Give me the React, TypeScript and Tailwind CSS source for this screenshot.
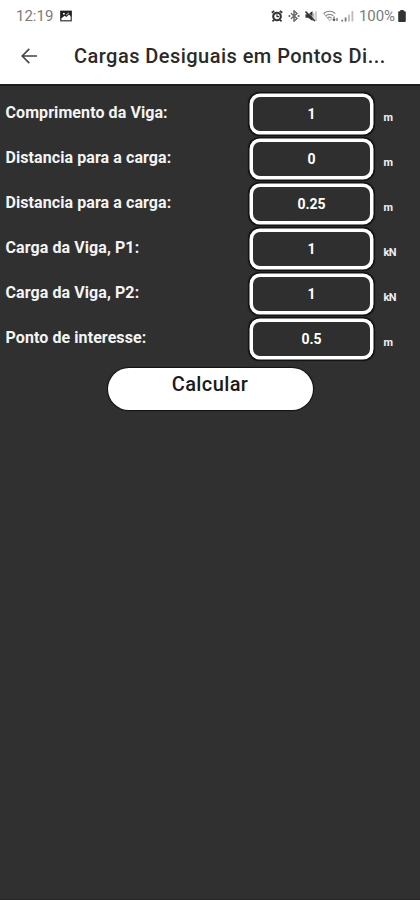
import { useState } from 'react';

interface Field {
  label: string;
  value: string;
  unit: string;
}

const initialFields: Field[] = [
  { label: 'Comprimento da Viga:', value: '1', unit: 'm' },
  { label: 'Distancia para a carga:', value: '0', unit: 'm' },
  { label: 'Distancia para a carga:', value: '0.25', unit: 'm' },
  { label: 'Carga da Viga, P1:', value: '1', unit: 'kN' },
  { label: 'Carga da Viga, P2:', value: '1', unit: 'kN' },
  { label: 'Ponto de interesse:', value: '0.5', unit: 'm' },
];

const StatusBar = () => (
  <div className="flex h-8 items-center pl-4 pr-[14px] text-[#7c7c7c]">
    <span className="w-[38px] whitespace-nowrap text-[15px] leading-8">12:19</span>
    {/* picture notification */}
    <svg className="ml-[6px] h-3 w-3" viewBox="0 0 12 12">
      <rect x="0.8" y="1.2" width="10.4" height="9.6" fill="#fff" stroke="#333" strokeWidth="1.2" />
      <path d="M.5 1h11v6L9 4.5 6.4 7 4.6 5.8.5 9z" fill="#222" />
      <path d="M3 3h1.8v1.4H3z" fill="#fff" />
      <path d="m6 5.2 3-2.4" stroke="#fff" strokeWidth="0.8" />
    </svg>

    <div className="ml-auto flex items-center">
      {/* alarm */}
      <svg className="h-3 w-3" viewBox="0 0 12 12" fill="none">
        <circle cx="6" cy="6.5" r="3.8" fill="#fff" stroke="#333" strokeWidth="2.1" />
        <path d="M.8 2.8 3.2.9M11.2 2.8 8.8.9M2.8 10 1.5 11.4M9.2 10l1.3 1.4" stroke="#333" strokeWidth="1.8" />
        <path d="M6 4.2v2.5h2" stroke="#333" strokeWidth="1.2" />
      </svg>
      {/* bluetooth */}
      <svg className="ml-[5px] h-3 w-3" viewBox="0 0 12 12" fill="none">
        <path d="m3 3.3 6 5.2-3 2.7V.8l3 2.7-6 5.2" stroke="#666" strokeWidth="1.4" />
        <circle cx="1.4" cy="6" r="1.1" fill="#666" />
        <circle cx="10.6" cy="6" r="1.1" fill="#666" />
      </svg>
      {/* muted speaker */}
      <svg className="ml-[5px] h-3 w-3" viewBox="0 0 12 12" fill="none">
        <path d="M.5 4.2h2.8L7.5 1v10L3.3 7.8H.5z" fill="#333" />
        <path d="m1.5 1 9 9" stroke="#fff" strokeWidth="0.7" />
        <path d="m.5 1.5 9.5 9.5" stroke="#333" strokeWidth="1.6" />
        <path d="M8.8 3.2v5.3M11 1.2v10" stroke="#999" strokeWidth="0.9" />
      </svg>
      {/* wifi */}
      <svg className="ml-[6px] h-3 w-4" viewBox="0 0 16 12" fill="none">
        <path d="M.7 3.5C4 .5 9 .5 12.3 3.5M2.7 5.8c2-2 5.5-2 7.6 0M4.6 8c1-1 2.8-1 3.8 0" stroke="#888" strokeWidth="1.2" />
        <path d="m.7 3.5 6 7.2L9 8.5" stroke="#999" strokeWidth="0.9" />
        <path d="M11 6.5v4M9.7 9.3 11 10.7l1.3-1.4M14 11V8" stroke="#555" strokeWidth="1.1" />
      </svg>
      {/* signal */}
      <svg className="ml-[2px] h-3 w-[13px]" viewBox="0 0 13 12" fill="none">
        <path d="M1.2 11.5V9.7M4.6 11.5v-4" stroke="#777" strokeWidth="1.8" />
        <path d="M8 11.5V4.7M11.4 11.5V1" stroke="#bcbcbc" strokeWidth="1.8" />
      </svg>
      <span className="ml-[5px] w-[37px] whitespace-nowrap text-[15px] leading-8 tracking-[-0.1px]">100%</span>
      {/* battery */}
      <svg className="ml-[2px] h-3 w-2" viewBox="0 0 8 12" fill="#333">
        <rect x="2.3" y="0" width="3.4" height="2" />
        <rect x="0.2" y="1.2" width="7.6" height="10.8" rx="1" />
      </svg>
    </div>
  </div>
);

const FieldRow = ({ field, onChange }: { field: Field; onChange: (value: string) => void }) => (
  <label className="flex h-10 items-start pl-[5.5px]">
    <span className="w-[244.5px] whitespace-nowrap pt-[7px] text-[16px] font-bold leading-6 tracking-[0.08px] text-[#f4f4f4]">
      {field.label}
    </span>
    <input
      value={field.value}
      onChange={(e) => onChange(e.target.value)}
      className="h-10 w-[123px] rounded-[10px] border-[3px] border-white bg-[#2f2f2f] text-center text-[14px] font-bold text-white shadow-[0_0_0_0.5px_#fff,0_0_1px_1.5px_#111] outline-none"
    />
    <span className="ml-[10.5px] pt-[16px] text-[11px] font-bold leading-4 tracking-[-0.6px] text-[#f0f0f0]">
      {field.unit}
    </span>
  </label>
);

export default function App() {
  const [fields, setFields] = useState(initialFields);

  const updateField = (index: number, value: string) => {
    setFields(fields.map((f, i) => (i === index ? { ...f, value } : f)));
  };

  return (
    <div className="flex h-[900px] w-[420px] flex-col overflow-hidden bg-[#303030] font-[Roboto,sans-serif]">
      <header className="h-[84px] bg-white">
        <StatusBar />
        <div className="flex h-[47px] items-center pl-[21px]">
          <svg className="h-4 w-4" viewBox="0 0 16 16" fill="none" stroke="#444" strokeWidth="1.6">
            <path d="M16 8H1.5M8.3.9 1.2 8l7.1 7.1" />
          </svg>
          <h1 className="ml-[37px] whitespace-nowrap text-[20px] font-medium leading-6 tracking-[0.46px] text-[#2a2a2a]">
            Cargas Desiguais em Pontos Di...
          </h1>
        </div>
      </header>

      <main className="flex flex-1 flex-col border-b border-[#2b2529] border-t-2 border-t-[#1c1c1c] pt-[8px]">
        <div className="flex flex-col gap-[5px]">
          {fields.map((field, i) => (
            <FieldRow key={i} field={field} onChange={(value) => updateField(i, value)} />
          ))}
        </div>
        <button className="mt-[9px] flex h-[42px] w-[205px] justify-center self-center rounded-full bg-white pt-[4px] text-[20px] font-medium leading-6 tracking-[0.4px] text-[#1a1a1a] shadow-[0_0_1px_1px_#111]">
          Calcular
        </button>
      </main>
    </div>
  );
}
